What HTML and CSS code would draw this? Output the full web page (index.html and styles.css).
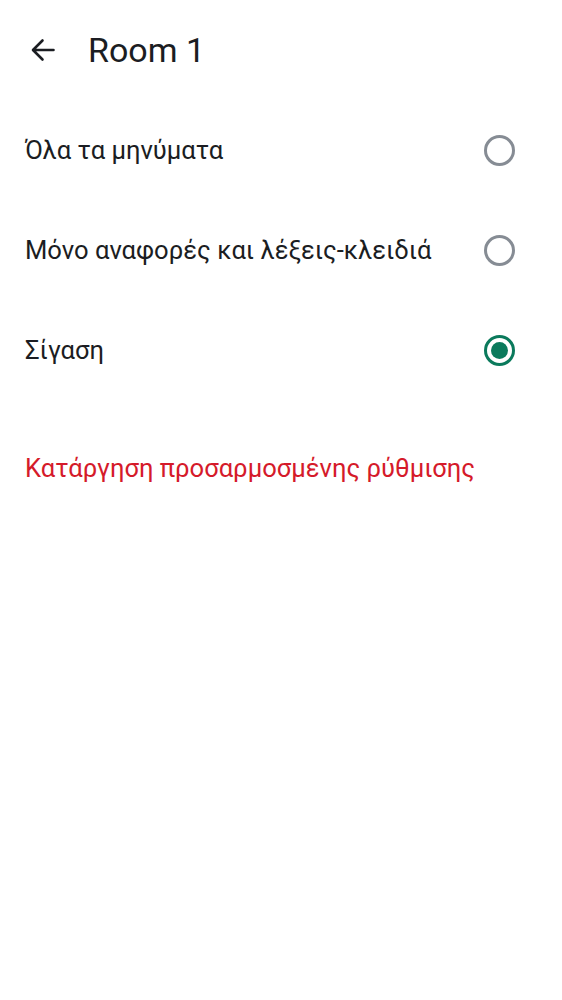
FILE: index.html
```html
<!DOCTYPE html>
<html>
<head>
<meta charset="utf-8">
<link rel="stylesheet" href="styles.css">
</head>
<body>
<div class="app">
  <header class="topbar">
    <button class="back" aria-label="Back">
      <svg width="24" height="24" viewBox="0 0 24 24"><path d="M22.5 12H2.5M11.5 2.5L2 12l9.5 9.5" fill="none" stroke="#1b1d22" stroke-width="2.6" stroke-linecap="round" stroke-linejoin="round"/></svg>
    </button>
    <h1 class="title">Room 1</h1>
  </header>
  <ul class="options">
    <li class="option"><span class="label">Όλα τα μηνύματα</span><span class="radio"></span></li>
    <li class="option"><span class="label">Μόνο αναφορές και λέξεις-κλειδιά</span><span class="radio"></span></li>
    <li class="option"><span class="label">Σίγαση</span><span class="radio checked"></span></li>
  </ul>
  <div class="reset">Κατάργηση προσαρμοσμένης ρύθμισης</div>
</div>
</body>
</html>
```
FILE: styles.css
```css
html, body { margin: 0; padding: 0; background: #fff; }
body { font-family: Roboto, "Noto Sans", sans-serif; color: #1b1d22; }
.app { width: 562px; }
.topbar { display: flex; align-items: center; height: 100px; padding-left: 31px; box-sizing: border-box; }
.back { border: 0; background: none; padding: 0; width: 24px; height: 24px; display: flex; margin-right: 33px; }
.title { margin: 0; font-size: 34px; font-weight: 400; line-height: 40px; }
.options { list-style: none; margin: 0; padding: 0; }
.option { display: flex; align-items: center; justify-content: space-between; height: 100px; padding: 0 47px 0 25px; }
.label { font-size: 25.6px; line-height: 30px; }
.radio { width: 25px; height: 25px; border: 3px solid #868c94; border-radius: 50%; box-sizing: content-box; position: relative; }
.radio.checked { border-color: #0b7a5c; }
.radio.checked::after { content: ""; position: absolute; left: 4px; top: 4px; width: 17px; height: 17px; border-radius: 50%; background: #0b7a5c; }
.reset { padding: 0 25px; margin-top: 52px; font-size: 25.6px; line-height: 32px; color: #d51a2a; }
```
